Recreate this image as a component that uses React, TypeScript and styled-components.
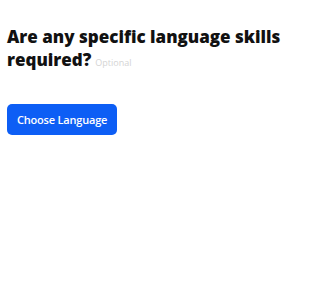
import styled, { createGlobalStyle } from 'styled-components';

const GlobalStyle = createGlobalStyle`
    body {
        margin: 0;
        background: #ffffff;
        font-family: "Open Sans", "Noto Sans", sans-serif;
    }
`;

const Page = styled.div`
    display: flex;
    flex-direction: column;
    align-items: flex-start;
    padding: 25px 0 25px 7px;
    gap: 30px;
`;

const Question = styled.h2`
    margin: 0;
    font-size: 17px;
    line-height: 23px;
    font-weight: 800;
    color: #111111;
    white-space: nowrap;
`;

const Optional = styled.span`
    margin-left: 4px;
    font-size: 9px;
    font-weight: 400;
    color: #d4d4d4;
`;

const PrimaryButton = styled.button`
    display: inline-flex;
    align-items: center;
    justify-content: center;
    height: 31px;
    padding: 0 10px;
    border: none;
    border-radius: 5px;
    background: #0d5ef5;
    color: #ffffff;
    font-family: inherit;
    font-size: 11px;
    font-weight: 600;
    letter-spacing: -0.2px;
    cursor: pointer;
`;

export default function App() {
    return (
        <>
            <GlobalStyle />
            <Page>
                <Question>
                    Are any specific language skills
                    <br />
                    required?
                    <Optional>Optional</Optional>
                </Question>
                <PrimaryButton>Choose Language</PrimaryButton>
            </Page>
        </>
    );
}
